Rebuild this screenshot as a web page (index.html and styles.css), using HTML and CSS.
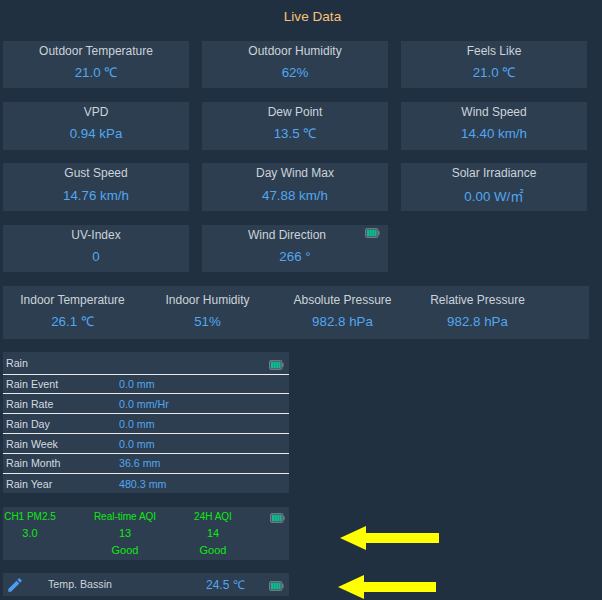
FILE: index.html
```html
<!DOCTYPE html>
<html lang="en">
<head>
<meta charset="utf-8">
<title>Live Data</title>
<link rel="stylesheet" href="styles.css">
</head>
<body>
<svg width="0" height="0" class="defs">
  <symbol id="batt" viewBox="0 0 15 11" preserveAspectRatio="none">
    <rect x="0.5" y="0.5" width="12.5" height="10" rx="1.5" fill="#4b5c68" stroke="#6f7f88"/>
    <rect x="13" y="3.5" width="1.6" height="4" fill="#6f7f88"/>
    <rect x="2" y="2" width="9.5" height="7" fill="#15b892"/>
    <path d="M4.5 2v7M7 2v7M9.5 2v7" stroke="#0d8f74" stroke-width="0.7"/>
  </symbol>
</svg>
<main class="page">
  <h1 class="title">Live Data</h1>
  <section class="cards">
    <div class="card"><div class="label">Outdoor Temperature</div><div class="value">21.0 ℃</div></div>
    <div class="card"><div class="label">Outdoor Humidity</div><div class="value">62%</div></div>
    <div class="card"><div class="label">Feels Like</div><div class="value">21.0 ℃</div></div>
    <div class="card"><div class="label">VPD</div><div class="value">0.94 kPa</div></div>
    <div class="card"><div class="label">Dew Point</div><div class="value">13.5 ℃</div></div>
    <div class="card"><div class="label">Wind Speed</div><div class="value">14.40 km/h</div></div>
    <div class="card"><div class="label">Gust Speed</div><div class="value">14.76 km/h</div></div>
    <div class="card"><div class="label">Day Wind Max</div><div class="value">47.88 km/h</div></div>
    <div class="card"><div class="label">Solar Irradiance</div><div class="value">0.00 W/<span class="cjk">㎡</span></div></div>
    <div class="card"><div class="label">UV-Index</div><div class="value">0</div></div>
    <div class="card"><div class="label label-batt">Wind Direction</div><div class="value">266 °</div><svg class="batt batt-card"><use href="#batt"/></svg></div>
  </section>
  <section class="indoor">
    <div class="cell"><div class="label">Indoor Temperature</div><div class="value">26.1 ℃</div></div>
    <div class="cell"><div class="label">Indoor Humidity</div><div class="value">51%</div></div>
    <div class="cell"><div class="label">Absolute Pressure</div><div class="value">982.8 hPa</div></div>
    <div class="cell"><div class="label">Relative Pressure</div><div class="value">982.8 hPa</div></div>
  </section>
  <section class="rain">
    <div class="rain-head">Rain<svg class="batt batt-rain"><use href="#batt"/></svg></div>
    <div class="rain-row"><span class="rain-name">Rain Event</span><span class="rain-val">0.0 mm</span></div>
    <div class="rain-row"><span class="rain-name">Rain Rate</span><span class="rain-val">0.0 mm/Hr</span></div>
    <div class="rain-row"><span class="rain-name">Rain Day</span><span class="rain-val">0.0 mm</span></div>
    <div class="rain-row"><span class="rain-name">Rain Week</span><span class="rain-val">0.0 mm</span></div>
    <div class="rain-row"><span class="rain-name">Rain Month</span><span class="rain-val">36.6 mm</span></div>
    <div class="rain-row"><span class="rain-name">Rain Year</span><span class="rain-val">480.3 mm</span></div>
  </section>
  <section class="aqi">
    <span class="aqi-head">CH1 PM2.5</span><span class="aqi-head">Real-time AQI</span><span class="aqi-head">24H AQI</span>
    <span class="aqi-val">3.0</span><span class="aqi-val">13</span><span class="aqi-val">14</span>
    <span class="aqi-val"></span><span class="aqi-val">Good</span><span class="aqi-val">Good</span>
    <svg class="batt batt-aqi"><use href="#batt"/></svg>
  </section>
  <section class="sensor">
    <svg class="pencil" viewBox="0 0 24 24"><path d="M3 17.25V21h3.75L17.81 9.94l-3.75-3.75L3 17.25zM20.71 7.04a1 1 0 0 0 0-1.41l-2.34-2.34a1 1 0 0 0-1.41 0l-1.83 1.83 3.75 3.75 1.83-1.83z"/></svg>
    <span class="sensor-name">Temp. Bassin</span>
    <span class="sensor-val">24.5 ℃</span>
    <svg class="batt batt-sensor"><use href="#batt"/></svg>
  </section>
</main>
<svg class="arrow arrow-one" viewBox="0 0 99 24"><path d="M0 12 26 0V7H99V17H26V24Z"/></svg>
<svg class="arrow arrow-two" viewBox="0 0 98 24"><path d="M0 12 26 0V7H98V17H26V24Z"/></svg>
</body>
</html>
```
FILE: styles.css
```css
html, body {
  margin: 0;
  padding: 0;
}
body {
  position: relative;
  height: 600px;
  overflow: hidden;
  background: #213040;
  font-family: "Liberation Sans", sans-serif;
}
.defs {
  position: absolute;
}
.page {
  padding-left: 3px;
}
.title {
  margin: 0;
  height: 40.6px;
  padding: 9px 0 0 19px;
  box-sizing: border-box;
  width: 600px;
  text-align: center;
  font-size: 13.6px;
  line-height: 16px;
  font-weight: 400;
  color: #f8c27a;
}
.cards {
  display: grid;
  grid-template-columns: repeat(3, 186px);
  grid-auto-rows: 47.6px;
  column-gap: 13px;
  row-gap: 13.73px;
}
.card {
  position: relative;
  background: #2d3e50;
  text-align: center;
  padding-top: 2px;
  box-sizing: border-box;
}
.label {
  font-size: 12px;
  line-height: 16px;
  color: #ccd3da;
}
.label-batt {
  padding-right: 16px;
}
.value {
  margin-top: 5.33px;
  font-size: 13.33px;
  line-height: 18px;
  color: #52a7f0;
}
.cjk {
  font-family: "Noto Sans CJK SC", sans-serif;
}
.batt {
  position: absolute;
  width: 15px;
  height: 10px;
}
.batt-card {
  top: 3px;
  right: 8px;
}
.indoor {
  display: grid;
  grid-template-columns: repeat(4, 135px);
  width: 586px;
  height: 53px;
  margin-top: 13.8px;
  padding: 6px 0 0 2px;
  box-sizing: border-box;
  background: #2d3e50;
  text-align: center;
}
.rain {
  position: relative;
  width: 286px;
  margin-top: 13px;
  background: #2d3e50;
  font-size: 10.67px;
  color: #d4dae0;
}
.rain-head {
  height: 22.6px;
  padding: 4px 0 0 3px;
  box-sizing: border-box;
  line-height: 14px;
  border-bottom: 1px solid #e8eaec;
}
.batt-rain {
  top: 8px;
  right: 5px;
}
.rain-row {
  display: flex;
  height: 19.8px;
  box-sizing: border-box;
  padding: 0.7px 0 0 3px;
  align-items: center;
  border-bottom: 1px solid #e8eaec;
}
.rain-row:last-child {
  border-bottom: 0;
}
.rain-name {
  width: 113px;
}
.rain-val {
  color: #52a7f0;
}
.aqi {
  position: relative;
  display: grid;
  grid-template-columns: 54px 136px 40px;
  grid-template-rows: 18px 16.5px 18.5px;
  width: 286px;
  height: 53px;
  margin-top: 14px;
  background: #2d3e50;
  text-align: center;
  color: #10e810;
  line-height: 17px;
}
.aqi-head {
  white-space: nowrap;
  font-size: 10px;
  padding-top: 1px;
}
.aqi-val {
  white-space: nowrap;
  font-size: 11px;
}
.batt-aqi {
  top: 6px;
  right: 4px;
}
.sensor {
  position: relative;
  display: flex;
  align-items: center;
  width: 286px;
  height: 23px;
  margin-top: 13px;
  background: #2d3e50;
}
.pencil {
  width: 18px;
  height: 18px;
  margin-left: 2.5px;
  fill: #4e9cf0;
}
.sensor-name {
  width: 158px;
  margin: 0 0 1px 24.5px;
  font-size: 10.67px;
  color: #ccd3da;
}
.sensor-val {
  margin-bottom: 1px;
  font-size: 12px;
  color: #52a7f0;
}
.batt-sensor {
  top: 8px;
  right: 5px;
}
.arrow {
  position: absolute;
  fill: #ffff00;
  height: 24px;
}
.arrow-one {
  left: 340px;
  top: 526px;
  width: 99px;
}
.arrow-two {
  left: 338px;
  top: 575px;
  width: 98px;
}
```
